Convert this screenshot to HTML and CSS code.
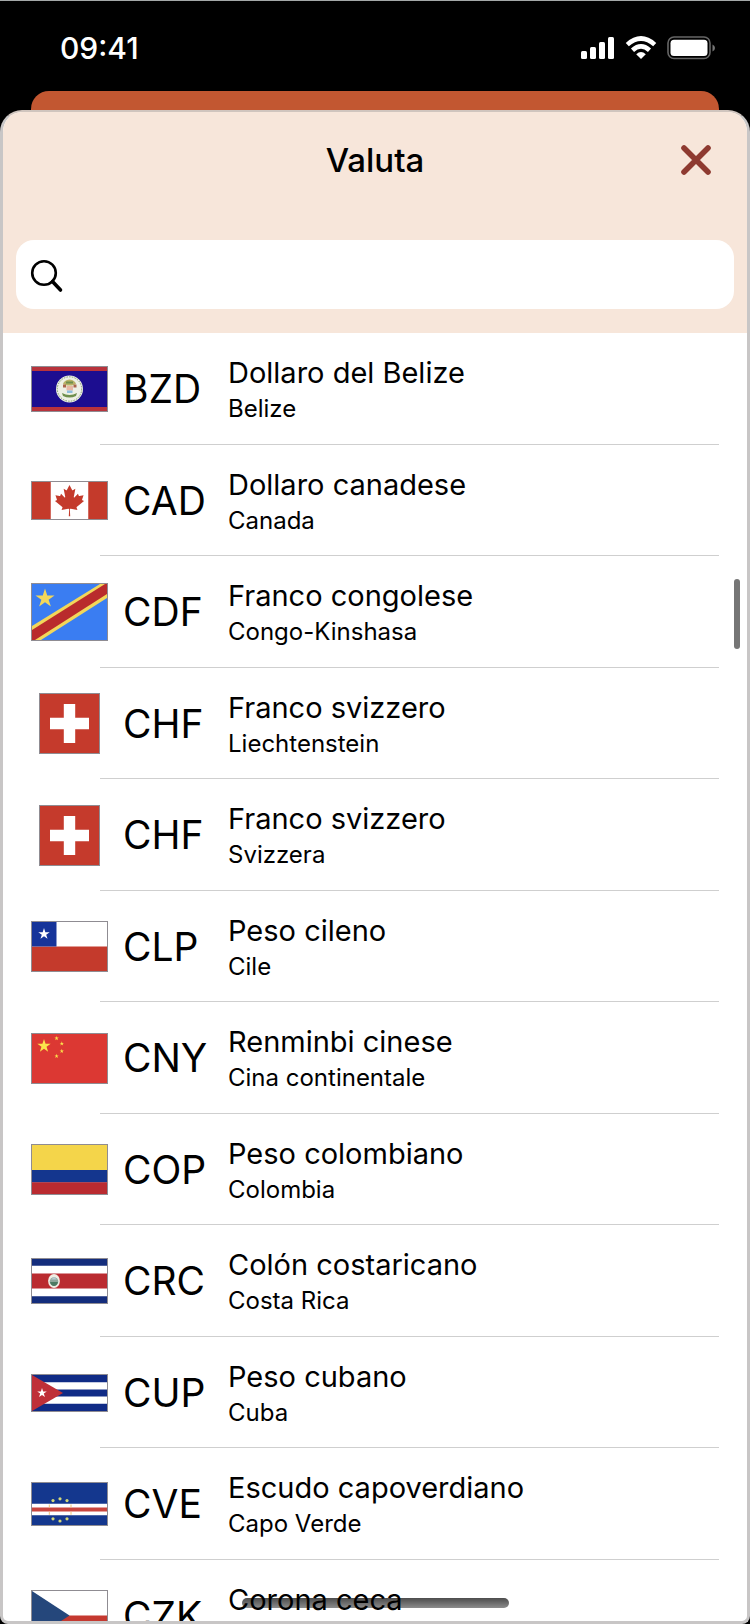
FILE: index.html
```html
<!DOCTYPE html>
<html lang="it">
<head>
<meta charset="utf-8">
<meta name="viewport" content="width=device-width, initial-scale=1">
<title>Valuta</title>
<link rel="stylesheet" href="styles.css">
</head>
<body>
<svg class="defs" aria-hidden="true">
  <symbol id="star" viewBox="-10 -10 20 20" overflow="visible"><path d="M0-10 2.25-3.09 9.51-3.09 3.63 1.18 5.88 8.09 0 3.82-5.88 8.09-3.63 1.18-9.51-3.09-2.25-3.09z"/></symbol>
</svg>
<div class="phone">
  <header class="status">
    <time class="clock">09:41</time>
    <div class="indicators">
      <svg width="34" height="24" viewBox="0 0 34 24" fill="#fff" aria-hidden="true"><rect y="15" width="6" height="8" rx="1.5"/><rect x="9" y="11" width="6" height="12" rx="1.5"/><rect x="18" y="6" width="6" height="17" rx="1.5"/><rect x="27" y="1" width="6" height="22" rx="1.5"/></svg>
      <svg width="32" height="24" viewBox="0 0 32 24" aria-hidden="true"><g fill="none" stroke="#fff" stroke-width="4.6"><path d="M2.300 8.600Q16-3.600 29.700 8.600"/><path d="M7.500 14.200Q16 6.600 24.500 14.200"/></g><path fill="#fff" d="M11.200 18.200Q16 14 20.800 18.200L16 23z"/></svg>
      <svg width="48" height="24" viewBox="0 0 48 24" aria-hidden="true"><rect x="1" y="1" width="42" height="21.500" rx="6" fill="none" stroke="#666" stroke-width="1.600"/><rect x="3.500" y="3.700" width="37" height="16.300" rx="3.500" fill="#fff"/><path d="M45.500 8.500q2.500 1 2.500 3.500t-2.500 3.500z" fill="#777"/></svg>
    </div>
  </header>
  <div class="backdrop-card"></div>
  <main class="sheet">
    <div class="sheet-head">
      <div class="title-bar">
        <h1 class="title">Valuta</h1>
        <button class="close" type="button" aria-label="Chiudi"><svg width="30" height="30" viewBox="0 0 30 30"><path d="M3 3 27 27M27 3 3 27" stroke="#8e3a30" stroke-width="5.600" stroke-linecap="round"/></svg></button>
      </div>
      <label class="search">
        <svg width="34" height="34" viewBox="0 0 34 34" fill="none" stroke="#000" aria-hidden="true"><circle cx="14" cy="14" r="11.800" stroke-width="2.600"/><path d="M22.500 22.500 30.500 31" stroke-width="3.600" stroke-linecap="round"/></svg>
        <input class="search-input" type="search" aria-label="Cerca valuta">
      </label>
    </div>
    <ul class="list">
      <li class="item"><button class="row" type="button">
        <svg class="flag" width="77" height="46" viewBox="0 0 75 44"><path fill="#1c0d90" d="M0 0h75v44H0z"/><path fill="#b8333c" d="M0 0h75v4H0zM0 40h75v4H0z"/><circle cx="37.500" cy="22" r="13.500" fill="#eef0e6"/><circle cx="37.500" cy="22" r="12.200" fill="none" stroke="#7f9d6c" stroke-width="1" stroke-dasharray="1.500 1.200"/><path fill="#b9b267" d="M31 17q1-4 6.500-4.500 5.500.5 6.500 4.500l-4 1.500h-5z"/><path fill="#6f8f4d" d="M34 14.500h7v2h-7zM30 26q7.500 4 15 0l-1 3q-6.500 3-13 0z"/><path fill="#a9654c" d="M31 17.500h3v3h-3zM41.500 17.500h3v3h-3z"/><path fill="#e8b9a5" d="M34.500 19h6.500v4.500h-6.500z"/><path fill="#8ebede" d="M35 23.500h5.500v2.500H35z"/></svg>
        <span class="code">BZD</span><span class="label"><span class="name">Dollaro del Belize</span><span class="place">Belize</span></span></button></li>
      <li class="item"><button class="row" type="button">
        <svg class="flag" width="77" height="39" viewBox="0 0 9600 4800" preserveAspectRatio="xMidYMid slice"><path fill="#c43a2b" d="M0 0h9600v4800H0z"/><path fill="#fff" d="m2400 0h4800v4800h-4800zm2490 4430-45-863a95 95 0 0 1 111-98l859 151-116-320a65 65 0 0 1 20-73l941-762-212-99a65 65 0 0 1-34-79l186-572-542 115a65 65 0 0 1-73-38l-105-247-423 454a65 65 0 0 1-111-57l204-1052-327 189a65 65 0 0 1-91-27l-332-652-332 652a65 65 0 0 1-91 27l-327-189 204 1052a65 65 0 0 1-111 57l-423-454-105 247a65 65 0 0 1-73 38l-542-115 186 572a65 65 0 0 1-34 79l-212 99 941 762a65 65 0 0 1 20 73l-116 320 859-151a95 95 0 0 1 111 98l-45 863z"/></svg>
        <span class="code">CAD</span><span class="label"><span class="name">Dollaro canadese</span><span class="place">Canada</span></span></button></li>
      <li class="item"><button class="row" type="button">
        <svg class="flag" width="77" height="58" viewBox="0 0 75 56"><path fill="#3a7df2" d="M0 0h75v56H0z"/><path fill="#f2d75a" d="M0 42 68 0h7v14L9 56H0z"/><path fill="#b92b2c" d="M0 46 73 0h2v10L3 56H0z"/><use href="#star" x="3" y="4.500" width="20" height="20" fill="#f2d75a"/></svg>
        <span class="code">CDF</span><span class="label"><span class="name">Franco congolese</span><span class="place">Congo-Kinshasa</span></span></button></li>
      <li class="item"><button class="row" type="button">
        <svg class="flag" width="61" height="61" viewBox="0 0 59 59"><path fill="#c53a2c" d="M0 0h59v59H0z"/><path fill="#fff" d="M23.800 10h11.400v13.800H49v11.400H35.200V49H23.800V35.200H10V23.800h13.800z"/></svg>
        <span class="code">CHF</span><span class="label"><span class="name">Franco svizzero</span><span class="place">Liechtenstein</span></span></button></li>
      <li class="item"><button class="row" type="button">
        <svg class="flag" width="61" height="61" viewBox="0 0 59 59"><path fill="#c53a2c" d="M0 0h59v59H0z"/><path fill="#fff" d="M23.800 10h11.400v13.800H49v11.400H35.200V49H23.800V35.200H10V23.800h13.800z"/></svg>
        <span class="code">CHF</span><span class="label"><span class="name">Franco svizzero</span><span class="place">Svizzera</span></span></button></li>
      <li class="item"><button class="row" type="button">
        <svg class="flag" width="77" height="51" viewBox="0 0 75 49"><path fill="#fff" d="M0 0h75v25H0z"/><path fill="#c43a2c" d="M0 24.500h75V49H0z"/><path fill="#16349a" d="M0 0h24.500v24.500H0z"/><use href="#star" x="6" y="6" width="12" height="12" fill="#fff"/></svg>
        <span class="code">CLP</span><span class="label"><span class="name">Peso cileno</span><span class="place">Cile</span></span></button></li>
      <li class="item"><button class="row" type="button">
        <svg class="flag" width="77" height="51" viewBox="0 0 75 49"><path fill="#dc3833" d="M0 0h75v49H0z"/><g fill="#fbe34b"><use href="#star" x="5" y="5" width="14" height="14"/><use href="#star" x="22.300" y="2" width="4.600" height="4.600"/><use href="#star" x="27.500" y="7.300" width="4.600" height="4.600"/><use href="#star" x="27.500" y="14.800" width="4.600" height="4.600"/><use href="#star" x="22.300" y="19.800" width="4.600" height="4.600"/></g></svg>
        <span class="code">CNY</span><span class="label"><span class="name">Renminbi cinese</span><span class="place">Cina continentale</span></span></button></li>
      <li class="item"><button class="row" type="button">
        <svg class="flag" width="77" height="51" viewBox="0 0 75 49"><path fill="#f4d54a" d="M0 0h75v25H0z"/><path fill="#14368e" d="M0 25h75v12.500H0z"/><path fill="#ba2b30" d="M0 37.300h75V49H0z"/></svg>
        <span class="code">COP</span><span class="label"><span class="name">Peso colombiano</span><span class="place">Colombia</span></span></button></li>
      <li class="item"><button class="row" type="button">
        <svg class="flag" width="77" height="46" viewBox="0 0 75 44"><path fill="#142d7c" d="M0 0h75v44H0z"/><path fill="#fff" d="M0 6.700h75v30.600H0z"/><path fill="#ba2b30" d="M0 14.500h75v15H0z"/><ellipse cx="22" cy="22" rx="5.900" ry="6.900" fill="#efeee4"/><circle cx="22" cy="22.500" r="4.300" fill="#8fa79b"/><path fill="#4d7a62" d="M18 23h8q-1 4-4 4t-4-4z"/><path fill="#b7c9d2" d="M19 20.500 22 18l3 2.500z"/></svg>
        <span class="code">CRC</span><span class="label"><span class="name">Colón costaricano</span><span class="place">Costa Rica</span></span></button></li>
      <li class="item"><button class="row" type="button">
        <svg class="flag" width="77" height="38" viewBox="0 0 75 36"><path fill="#102b86" d="M0 0h75v36H0z"/><path fill="#fff" d="M0 7.200h75v7.200H0zM0 21.600h75v7.200H0z"/><path fill="#bf2f38" d="M0 0 31 18 0 36z"/><use href="#star" x="5" y="13" width="10" height="10" fill="#fff"/></svg>
        <span class="code">CUP</span><span class="label"><span class="name">Peso cubano</span><span class="place">Cuba</span></span></button></li>
      <li class="item"><button class="row" type="button">
        <svg class="flag" width="77" height="44" viewBox="0 0 75 42"><path fill="#14378e" d="M0 0h75v42H0z"/><path fill="#fff" d="M0 20.800h75v11.500H0z"/><path fill="#c8453f" d="M0 24.600h75v3.900H0z"/><g fill="#d5d878"><circle cx="21" cy="17.600" r="1.600"/><circle cx="28" cy="15.800" r="1.600"/><circle cx="35" cy="17.600" r="1.600"/><circle cx="21" cy="35.800" r="1.600"/><circle cx="28" cy="38" r="1.600"/><circle cx="35" cy="35.800" r="1.600"/></g><path stroke="#f0c477" stroke-width="1" d="M17.300 21.500v3M39 21.500v3M17.300 28.800v3M39 28.800v3"/></svg>
        <span class="code">CVE</span><span class="label"><span class="name">Escudo capoverdiano</span><span class="place">Capo Verde</span></span></button></li>
      <li class="item"><button class="row" type="button">
        <svg class="flag" width="77" height="51" viewBox="0 0 75 49"><path fill="#fff" d="M0 0h75v25H0z"/><path fill="#c53930" d="M0 24.500h75V49H0z"/><path fill="#25477b" d="M0 0 37.500 24.500 0 49z"/></svg>
        <span class="code">CZK</span><span class="label"><span class="name">Corona ceca</span></span></button></li>
    </ul>
  </main>
  <div class="scroll-thumb"></div>
  <div class="home-indicator"></div>
</div>
</body>
</html>
```
FILE: styles.css
```css
* { box-sizing: border-box; }

body {
  margin: 0;
  background: #000;
  color: #000;
  font-family: Inter, "Liberation Sans", sans-serif;
}

button, input { font: inherit; color: inherit; }

.defs { position: absolute; width: 0; height: 0; }

.phone {
  position: relative;
  display: flex;
  flex-direction: column;
  height: 100vh;
  overflow: hidden;
  border-top: 1px solid #a4a8a8;
}

.status {
  flex: none;
  display: flex;
  justify-content: space-between;
  align-items: center;
  height: 90px;
  padding: 6px 35px 2px 60px;
  color: #fff;
}

.clock {
  font-size: 30px;
  line-height: 36px;
  font-weight: 500;
}

.indicators { display: flex; gap: 10px; }

.backdrop-card {
  flex: none;
  height: 43px;
  margin: 0 31px -24px;
  border-radius: 18px 18px 0 0;
  background: #c25731;
}

.sheet {
  position: relative;
  flex: 1;
  min-height: 0;
  overflow: hidden;
  border: 3px solid #c8c6c6;
  border-top: 2px solid #d0c5be;
  border-radius: 22px 22px 8px 8px;
  background: #fff;
}

.sheet-head {
  padding: 16px 13px 24px;
  background: #f7e6da;
}

.title-bar {
  display: grid;
  grid-template-columns: 64px 1fr 64px;
  align-items: center;
  height: 64px;
  margin-bottom: 48px;
}

.title {
  grid-column: 2;
  margin: 0;
  font-size: 33px;
  line-height: 40px;
  font-weight: 500;
  text-align: center;
}

.close {
  display: grid;
  place-items: center;
  width: 52px;
  height: 52px;
  padding: 0;
  border: 0;
  background: none;
}

.search {
  display: flex;
  align-items: center;
  gap: 12px;
  height: 69px;
  padding: 2px 14px 0;
  border-radius: 18px;
  background: #fff;
}

.search-input {
  flex: 1;
  min-width: 0;
  border: 0;
  outline: 0;
  background: none;
  font-size: 30px;
}

.list {
  margin: 0;
  padding: 0;
  list-style: none;
}

.item {
  position: relative;
  height: 112px;
}

.item:nth-child(even) { height: 111px; }

/* Separator inset from the flag column */
.item::after {
  content: "";
  position: absolute;
  left: 97px;
  right: 28px;
  bottom: 0;
  height: 1px;
  background: #cfcfcf;
}

.row {
  display: grid;
  grid-template-columns: 77px 90px 1fr;
  gap: 15px;
  align-items: center;
  width: 100%;
  height: 100%;
  padding: 0 28px;
  border: 0;
  background: none;
  text-align: left;
}

.flag {
  justify-self: center;
  border: 1px solid #8f8c92;
}

.code {
  font-size: 39px;
  line-height: 48px;
}

.label {
  display: flex;
  flex-direction: column;
  gap: 1px;
  min-height: 72px;
  padding-top: 1px;
  white-space: nowrap;
}

.name {
  font-size: 29px;
  line-height: 38px;
}

.place {
  font-size: 24px;
  line-height: 32px;
}

.scroll-thumb {
  position: absolute;
  top: 578px;
  right: 10px;
  width: 6px;
  height: 70px;
  border-radius: 3px;
  background: #767676;
}

.home-indicator {
  position: absolute;
  left: 50%;
  bottom: 16px;
  width: 267px;
  height: 10px;
  margin-left: -133px;
  border-radius: 5px;
  background: linear-gradient(rgba(0, 0, 0, 0.7), rgba(0, 0, 0, 0.45));
}
```
